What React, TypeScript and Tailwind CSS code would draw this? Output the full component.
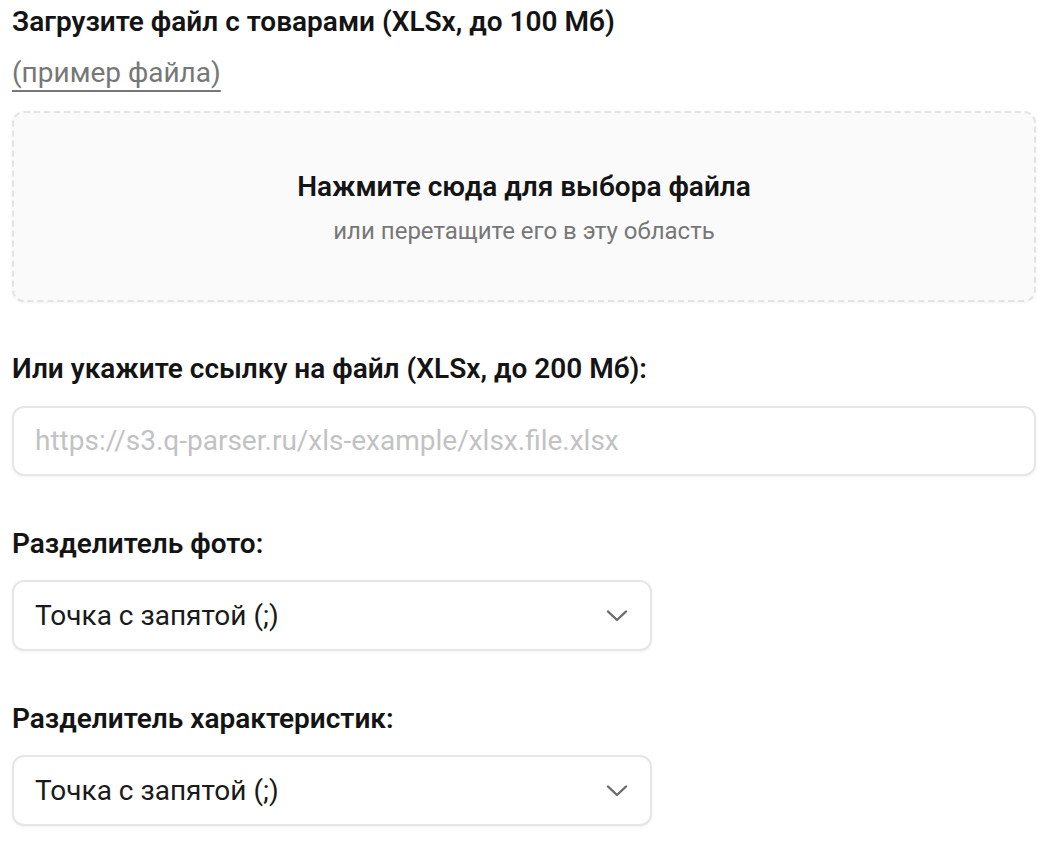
import React from "react";

function Chevron() {
  return (
    <svg width="22" height="12" viewBox="0 0 22 12" fill="none" className="shrink-0">
      <path d="M2 1.5 L11 10 L20 1.5" stroke="#6b6b6b" strokeWidth="2.4" strokeLinecap="round" strokeLinejoin="round" />
    </svg>
  );
}

function Select({ value }: { value: string }) {
  return (
    <div className="w-[640px] h-[71px] rounded-[12px] border-2 border-[#e6e6e6] bg-white shadow-[0_1px_3px_rgba(0,0,0,0.06)] flex items-center justify-between pl-[21px] pr-[22px]">
      <span className="text-[28px] text-[#1a1a1a] leading-none">{value}</span>
      <Chevron />
    </div>
  );
}

export default function App() {
  return (
    <div
      className="w-[1048px] h-[846px] bg-white px-3 pt-[2px] overflow-hidden"
      style={{ fontFamily: "Roboto, 'Noto Sans', sans-serif" }}
    >
      <div className="w-[1024px] flex flex-col">
        <div className="h-[40px] flex items-center text-[28px] font-semibold text-[#141414] whitespace-nowrap">
          Загрузите файл с товарами (XLSx, до 100 Мб)
        </div>
        <div className="h-[40px] mt-[11px] flex items-center">
          <span className="text-[28px] text-[#777777] underline decoration-[2px] underline-offset-[8px] decoration-[#777777]">
            (пример файла)
          </span>
        </div>
        <div className="mt-[18px] h-[191px] rounded-[12px] border-2 border-dashed border-[#e3e3e3] bg-[#fafafa] shadow-[0_1px_3px_rgba(0,0,0,0.05)] flex flex-col items-center justify-center">
          <div className="text-[28px] font-semibold text-[#141414] leading-[32px] mt-[3px]">
            Нажмите сюда для выбора файла
          </div>
          <div className="text-[24px] text-[#777777] leading-[28px] mt-[14px]">
            или перетащите его в эту область
          </div>
        </div>
        <div className="mt-[47px] h-[40px] flex items-center text-[28px] font-semibold text-[#141414] whitespace-nowrap">
          Или укажите ссылку на файл (XLSx, до 200 Мб):
        </div>
        <div className="mt-[17px] h-[70px] rounded-[12px] border-2 border-[#e6e6e6] bg-white shadow-[0_1px_3px_rgba(0,0,0,0.05)] flex items-center pl-[21px]">
          <span className="text-[28px] text-[#c2c2c2] leading-none">
            https://s3.q-parser.ru/xls-example/xlsx.file.xlsx
          </span>
        </div>
        <div className="mt-[48px] h-[40px] flex items-center text-[28px] font-semibold text-[#141414]">
          Разделитель фото:
        </div>
        <div className="mt-[16px]">
          <Select value="Точка с запятой (;)" />
        </div>
        <div className="mt-[48px] h-[40px] flex items-center text-[28px] font-semibold text-[#141414]">
          Разделитель характеристик:
        </div>
        <div className="mt-[16px]">
          <Select value="Точка с запятой (;)" />
        </div>
      </div>
    </div>
  );
}
